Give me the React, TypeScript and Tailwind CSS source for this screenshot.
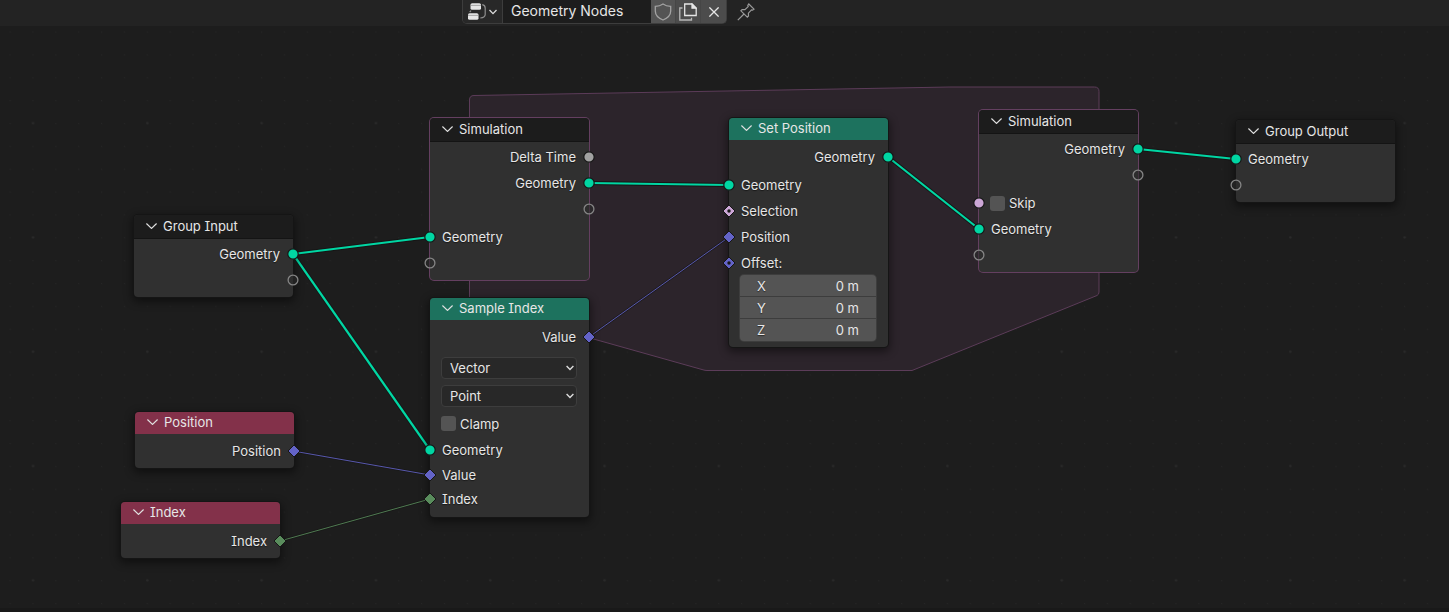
import React, { useState } from "react";
import clsx from "clsx";

type Shape = "circle" | "diamond" | "diamond-dot" | "empty";

const Socket = ({
    side,
    shape = "circle",
    color = "#00d6a3",
}: {
    side: "left" | "right";
    shape?: Shape;
    color?: string;
}) => (
    <svg
        viewBox="0 0 16 16"
        className={clsx(
            "absolute top-1/2 size-4 -translate-y-1/2",
            side === "left" ? "-left-2" : "-right-2"
        )}
    >
        {shape === "empty" && (
            <circle cx="8" cy="8" r="4.9" fill="#2b2b2b" fillOpacity="0.6" stroke="#858585" strokeWidth="1.3" />
        )}
        {shape === "circle" && (
            <circle cx="8" cy="8" r="5.2" fill={color} stroke="#161616" strokeWidth="1.2" />
        )}
        {(shape === "diamond" || shape === "diamond-dot") && (
            <path d="M8 2 14 8 8 14 2 8Z" fill={color} stroke="#161616" strokeWidth="1" />
        )}
        {shape === "diamond-dot" && <circle cx="8" cy="8" r="1.7" fill="#161616" />}
    </svg>
);

const Row = ({
    label,
    side = "left",
    shape,
    color,
    height = "h-[26px]",
    children,
}: {
    label?: string;
    side?: "left" | "right";
    shape?: Shape;
    color?: string;
    height?: string;
    children?: React.ReactNode;
}) => (
    <div
        className={clsx(
            "relative flex items-center",
            height,
            side === "right" ? "justify-end pr-[13px]" : children ? "pl-[11px]" : "pl-3"
        )}
    >
        {label && <span>{label}</span>}
        {children}
        <Socket side={side} shape={shape} color={color} />
    </div>
);

const headers = {
    dark: "h-6 bg-[#1c1c1c] border-b border-[#141414]",
    green: "h-[22px] bg-[#1d725e]",
    red: "h-[22px] bg-[#83314a]",
};

const Node = ({
    title,
    x,
    y,
    kind = "dark",
    zone = false,
    children,
}: {
    title: string;
    x: number;
    y: number;
    kind?: keyof typeof headers;
    zone?: boolean;
    children: React.ReactNode;
}) => (
    <section
        style={{ left: x, top: y }}
        className={clsx(
            "absolute w-[159px] rounded-[4px] bg-[#303030]",
            zone
                ? "shadow-[0_0_0_1px_#643f60]"
                : "shadow-[0_0_0_1px_#151515,0_3px_8px_2px_rgba(0,0,0,0.45)]"
        )}
    >
        <header className={clsx("flex items-center rounded-t-[4px] pb-0.5 pl-3", headers[kind])}>
            <button className="flex items-center gap-1.5">
                <svg viewBox="0 0 11 6" className="h-[6px] w-[11px]" fill="none" stroke="#e0e0e0" strokeWidth="1.2">
                    <path d="M0.4 0.5 5.5 5.4 10.6 0.5" />
                </svg>
                <span>{title}</span>
            </button>
        </header>
        <div className={kind === "dark" ? "pt-0.5" : "pt-1"}>{children}</div>
    </section>
);

const Dropdown = ({ label, options }: { label: string; options: string[] }) => (
    <div className="relative flex h-7 items-center pr-3 pl-[11px]">
        <select
            aria-label={label}
            className="h-[22px] w-full appearance-none rounded-[4px] border border-[#3d3d3d] bg-[#282828] px-2 text-[#e6e6e6] outline-none"
        >
            {options.map((o) => (
                <option key={o}>{o}</option>
            ))}
        </select>
        <svg
            viewBox="0 0 8 6"
            className="pointer-events-none absolute right-[15px] h-[6px] w-2"
            fill="none"
            stroke="#dcdcdc"
            strokeWidth="1.4"
        >
            <path d="M0.6 1 4 4.5 7.4 1" />
        </svg>
    </div>
);

const Check = ({ label }: { label: string }) => (
    <label className="flex items-center gap-1">
        <input
            type="checkbox"
            className="size-[15px] appearance-none rounded-[3px] bg-[#545454] checked:bg-[#4772b3]"
        />
        {label}
    </label>
);

const VectorField = () => {
    const [value, setValue] = useState(["0 m", "0 m", "0 m"]);
    return (
        <div className="mr-3 ml-[11px] flex flex-col divide-y divide-[#3d3d3d] overflow-hidden rounded-[4px] bg-[#545454] ring-1 ring-[#3d3d3d]">
            {["X", "Y", "Z"].map((axis, i) => (
                <label key={axis} className="flex h-[22px] items-center justify-between px-[17px]">
                    {axis}
                    <input
                        value={value[i]}
                        onChange={(e) => setValue(value.map((v, j) => (j === i ? e.target.value : v)))}
                        className="w-16 bg-transparent text-right outline-none"
                    />
                </label>
            ))}
        </div>
    );
};

const Toolbar = () => (
    <header className="flex h-[26px] items-start gap-2.5 bg-[#232323] pl-[462px]">
        <div className="flex h-6 items-stretch overflow-hidden rounded-b-[5px] border border-t-0 border-[#3d3d3d]">
            <button aria-label="Browse node group" className="flex w-[39px] items-center gap-[3px] bg-[#282828] pl-[5px]">
                <svg viewBox="0 0 18 18" className="size-[18px]" fill="none">
                    <rect x="2.5" y="0.2" width="10.5" height="6.6" rx="1.6" fill="#e6e6e6" />
                    <path d="M2.5 2.4h10.5" stroke="#8a8a8a" strokeWidth="0.7" />
                    <rect x="0" y="10.2" width="10.5" height="6.6" rx="1.6" fill="#e6e6e6" />
                    <path d="M0 12.4h10.5" stroke="#8a8a8a" strokeWidth="0.7" />
                    <path
                        d="M14.3 1.600Q17.200 2.200 17.200 5V11.500Q17.200 14.500 12.300 15M3 7.600 1.700 9.200"
                        stroke="#8f8f8f"
                        strokeWidth="1.2"
                    />
                </svg>
                <svg viewBox="0 0 8 6" className="h-[6px] w-2" fill="none" stroke="#dcdcdc" strokeWidth="1.3">
                    <path d="M0.5 1 4 4.6 7.5 1" />
                </svg>
            </button>
            <input
                aria-label="Node group name"
                defaultValue="Geometry Nodes"
                className="w-[149px] border-l border-[#3d3d3d] bg-[#1d1d1d] px-2 pb-0.5 text-[14px] outline-none"
            />
            <div className="flex divide-x divide-[#464646] bg-[#545454]">
                <button aria-label="Fake user" className="flex w-[25px] items-center justify-center">
                    <svg viewBox="0 0 18 18" className="size-[18px]" fill="none" stroke="#a3a3a3" strokeWidth="1.3">
                        <path d="M9 1C7 2.5 4.5 3.3 1.3 3.3V8c0 4 2.9 7 7.7 9 4.8-2 7.7-5 7.7-9V3.3C13.5 3.3 11 2.5 9 1Z" />
                    </svg>
                </button>
                <button aria-label="New copy" className="flex w-[25px] items-center justify-center bg-[#4c4c4c]">
                    <svg viewBox="0 0 18 18" className="size-[18px]" fill="none" stroke="#e6e6e6" strokeWidth="1.3">
                        <path d="M5.7 1h7.3L17.2 5.200V12.500H5.700Z" />
                        <path d="M13 1V5.200H17.200Z" fill="#e6e6e6" />
                        <path d="M3.500 5H.8V17H12.500V14.700" stroke="#b8b8b8" />
                    </svg>
                </button>
                <button aria-label="Unlink" className="flex w-[25px] items-center justify-center bg-[#4c4c4c]">
                    <svg viewBox="0 0 10 10" className="size-[10px]" fill="none" stroke="#e6e6e6" strokeWidth="1.3">
                        <path d="M.4.4 9.6 9.6M9.6.4.4 9.6" />
                    </svg>
                </button>
            </div>
        </div>
        <button aria-label="Pin" className="flex h-[23px] items-center">
            <svg viewBox="0 0 18 18" className="size-[18px]" fill="none" stroke="#9a9a9a" strokeWidth="1.2">
                <path d="M11.8 1 17 6.2 15.6 7.2 14.5 6.9 11.4 10.2 11.5 13 10.3 14.2 3.9 7.8 5.1 6.6 7.9 6.7 11.2 3.6 10.8 2.3Z" />
                <path d="M7 11 .8 17.2" />
            </svg>
        </button>
    </header>
);

// y values are measured from the top of the canvas
const thickLinks = [
    [293, 228, 430, 211],
    [293, 228, 430, 424],
    [589, 157, 729, 159],
    [888, 131, 979, 203],
    [1138, 123, 1236, 133],
];

const thinLinks = [
    { line: [293, 425, 430, 449], color: "#6363c7" },
    { line: [589, 311, 729, 211], color: "#6363c7" },
    { line: [280, 515, 430, 473], color: "#598c5c" },
];

const Links = () => (
    <svg className="absolute inset-0 h-full w-full" fill="none">
        <defs>
            <pattern id="grid" x="-1.4" y="86" width="22.86" height="22.86" patternUnits="userSpaceOnUse">
                <rect x="11" y="11" width="1" height="1" fill="#272727" />
            </pattern>
            <pattern id="grid-major" x="-24" y="40" width="114.3" height="114.3" patternUnits="userSpaceOnUse">
                <circle cx="57" cy="57" r="1.2" fill="#2a2a2a" />
            </pattern>
        </defs>
        <rect width="100%" height="100%" fill="url(#grid)" />
        <rect width="100%" height="100%" fill="url(#grid-major)" />
        {/* simulation zone */}
        <path
            d="M469.5 279V74q0-4.5 4.5-4.5L950 61H1094.5q4.5 0 4.5 4.5V266q0 2.5-2 3.5L912 344.5H707q-2 0-4-.7L590 312Z"
            fill="#2c242b"
            stroke="#5c3c59"
        />
        {thickLinks.map(([x1, y1, x2, y2]) => (
            <g key={`${x1}-${y2}`}>
                <path d={`M${x1} ${y1} ${x2} ${y2}`} stroke="#161616" strokeWidth="4" />
                <path d={`M${x1} ${y1} ${x2} ${y2}`} stroke="#00d6a3" strokeWidth="2.2" />
            </g>
        ))}
        {thinLinks.map(({ line: [x1, y1, x2, y2], color }) => (
            <g key={`${x1}-${y2}`}>
                <path d={`M${x1} ${y1} ${x2} ${y2}`} stroke="#161616" strokeOpacity="0.6" strokeWidth="2.5" />
                <path d={`M${x1} ${y1} ${x2} ${y2}`} stroke={color} strokeOpacity="0.85" />
            </g>
        ))}
    </svg>
);

const App = () => {
    return (
        <div className="flex min-h-screen flex-col bg-[#1d1d1d] font-['Inter',sans-serif] text-[13px] leading-4 text-[#e6e6e6] [font-feature-settings:'cv08'] [text-shadow:0_1px_1px_rgba(0,0,0,0.5)]">
            <Toolbar />
            <main className="relative flex-1 overflow-hidden border-b-4 border-[#191919]">
                <Links />

                <Node title="Group Input" x={134} y={189}>
                    <Row side="right" label="Geometry" />
                    <Row side="right" shape="empty" />
                    <div className="h-1" />
                </Node>

                <Node title="Position" x={135} y={386} kind="red">
                    <Row side="right" label="Position" shape="diamond" color="#6363c7" />
                    <div className="h-1" />
                </Node>

                <Node title="Index" x={121} y={476} kind="red">
                    <Row side="right" label="Index" shape="diamond" color="#598c5c" />
                    <div className="h-1" />
                </Node>

                <Node title="Simulation" x={430} y={92} zone>
                    <Row side="right" label="Delta Time" color="#a1a1a1" />
                    <Row side="right" label="Geometry" />
                    <Row side="right" shape="empty" />
                    <div className="h-0.5" />
                    <Row label="Geometry" />
                    <Row shape="empty" />
                    <div className="h-1" />
                </Node>

                <Node title="Sample Index" x={430} y={272} kind="green">
                    <Row side="right" label="Value" shape="diamond" color="#6363c7" />
                    <div className="h-1" />
                    <Dropdown label="Data type" options={["Vector", "Float", "Integer", "Boolean"]} />
                    <Dropdown label="Domain" options={["Point", "Edge", "Face"]} />
                    <div className="flex h-[27px] items-center pl-[11px]">
                        <Check label="Clamp" />
                    </div>
                    <Row label="Geometry" />
                    <Row label="Value" shape="diamond" color="#6363c7" height="h-6" />
                    <Row label="Index" shape="diamond" color="#598c5c" height="h-6" />
                    <div className="h-1.5" />
                </Node>

                <Node title="Set Position" x={729} y={92} kind="green">
                    <Row side="right" label="Geometry" />
                    <div className="h-0.5" />
                    <Row label="Geometry" />
                    <Row label="Selection" shape="diamond-dot" color="#cca6d6" />
                    <Row label="Position" shape="diamond" color="#6363c7" />
                    <Row label="Offset:" shape="diamond-dot" color="#6363c7" height="h-[25px]" />
                    <VectorField />
                    <div className="h-1.5" />
                </Node>

                <Node title="Simulation" x={979} y={84} zone>
                    <Row side="right" label="Geometry" />
                    <Row side="right" shape="empty" />
                    <div className="h-0.5" />
                    <Row color="#cca6d6">
                        <Check label="Skip" />
                    </Row>
                    <Row label="Geometry" />
                    <Row shape="empty" />
                    <div className="h-1" />
                </Node>

                <Node title="Group Output" x={1236} y={94}>
                    <Row label="Geometry" />
                    <Row shape="empty" />
                    <div className="h-1" />
                </Node>
            </main>
        </div>
    );
};

export default App;
